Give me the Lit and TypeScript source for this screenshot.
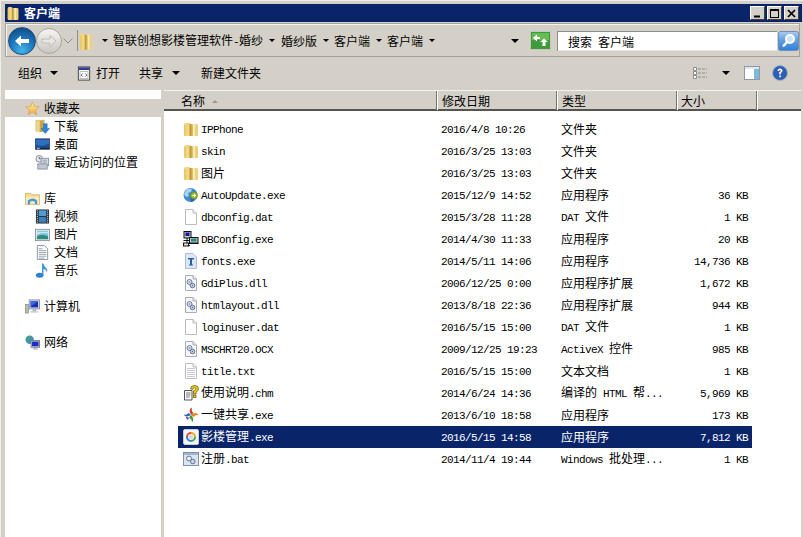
import { LitElement, html, css, svg } from "lit";
import { customElement } from "lit/decorators.js";

const folder = () => svg`<svg class="ic" viewBox="0 0 16 16" preserveAspectRatio="none">
  <path d="M1 3.500 Q1 2 2.500 2 H5.500 Q7 2 7 3.500 V13.500 Q7 15 5.500 15 H2.500 Q1 15 1 13.500Z" fill="#f0d680"/>
  <path d="M1 4 H3 V15 H2.500 Q1 15 1 13.500Z" fill="#e8c868"/>
  <path d="M7 3 H13.500 Q15 3 15 4.500 V13.500 Q15 15 13.500 15 H7Z" fill="#f8eab0"/>
  <path d="M12 3 H13.500 Q15 3 15 4.500 V13.500 Q15 15 13.500 15 H12Z" fill="#ecd07e"/>
  <path d="M6.500 2.500 L9.500 3.500 V15 H6.500Z" fill="#bd9a3e"/>
  <path d="M8.500 3.500 L9.500 3.500 V15 H8.500Z" fill="#dcbc62"/>
</svg>`;

const blank = () => svg`<svg class="ic" viewBox="0 0 16 16">
  <path d="M2.500 .500 H10 L13.500 4 V15.500 H2.500Z" fill="#fff" stroke="#b9bcc2"/><path d="M10 .500 V4 H13.500" fill="#eef0f3" stroke="#b9bcc2"/>
</svg>`;

const txt = () => svg`<svg class="ic" viewBox="0 0 16 16">
  <path d="M2.500 .500 H10 L13.500 4 V15.500 H2.500Z" fill="#fff" stroke="#b9bcc2"/><path d="M10 .500 V4 H13.500" fill="#eef0f3" stroke="#b9bcc2"/>
  <path d="M4 5.500H12M4 7.500H12M4 9.500H12M4 11.500H12M4 13.500H12" stroke="#c8ccd2"/>
</svg>`;

const dll = () => svg`<svg class="ic" viewBox="0 0 16 16">
  <path d="M2.500 .500 H10 L13.500 4 V15.500 H2.500Z" fill="#f6f8fb" stroke="#a8adb6"/><path d="M10 .500 V4 H13.500" fill="#e6eaf0" stroke="#a8adb6"/>
  <circle cx="6.500" cy="7" r="2.500" fill="#dfe6ee" stroke="#6f7f96"/><circle cx="9.500" cy="10.500" r="2.300" fill="#c8d4e2" stroke="#5d7595"/><circle cx="6.500" cy="7" r=".8" fill="#6f7f96"/><circle cx="9.500" cy="10.500" r=".7" fill="#5d7595"/>
</svg>`;

const globe = () => svg`<svg class="ic" viewBox="0 0 16 16">
  <circle cx="7.500" cy="8" r="7" fill="#3f8bc9"/><path d="M3 3 Q6 1 9 2 L8 5 L5 6 L6 9 L3 10 L1 7Z" fill="#a9d3ee"/><path d="M7 11 L11 10 L11 14 L8 15Z" fill="#2c6aa3"/>
  <circle cx="11" cy="8.500" r="3.500" fill="#9dbb2f" stroke="#5f7f1a" stroke-width=".6"/><path d="M9.200 8.500 H12.500 M11 7 L12.700 8.500 L11 10" stroke="#fff" fill="none"/>
</svg>`;

const dbc = () => svg`<svg class="ic" viewBox="0 0 16 16">
  <rect x="1" y="0.500" width="7" height="6.500" fill="#c8ccd0" stroke="#111"/><rect x="2.500" y="1.500" width="4" height="3.500" fill="#16169a"/>
  <rect x="6.500" y="6.500" width="8.500" height="5.500" fill="#c8ccd0" stroke="#111"/><rect x="8" y="7.500" width="5.500" height="3" fill="#1f8a8a"/>
  <path d="M4 7 V12 M0.500 9.500 H6 M6 12.500 H15.500 M1 14.500 H7 M3 12 V14.500" stroke="#111"/><rect x="0.500" y="12" width="5" height="3" fill="#dfe0e0" stroke="#111"/>
</svg>`;

const fonts = () => svg`<svg class="ic" viewBox="0 0 16 16">
  <path d="M2.500 .500 H10 L13.500 4 V15.500 H2.500Z" fill="#dde8f6" stroke="#aebdd4"/>
  <path d="M5 5 H11 V6.500 H9 V11.500 H10 V12.500 H6 V11.500 H7 V6.500 H5Z" fill="#2b5fa8"/>
</svg>`;

const chm = () => svg`<svg class="ic" viewBox="0 0 16 16">
  <path d="M1.500 5.500 H9 V15 H1.500Z" fill="#fbfbfb" stroke="#555"/><path d="M3 8 H7.500 M3 10 H7.500 M3 12 H6.500" stroke="#777"/>
  <path d="M7.500 4 Q7.500 .500 11.500 .500 Q15.500 .500 15.500 3.800 Q15.500 6 13 7 V9 H10.500 V5.800 Q13 5.300 13 3.800 Q13 2.800 11.500 2.800 Q10 2.800 10 4.300Z" fill="#f7d21b" stroke="#5a4a00" stroke-width=".7"/><rect x="10.500" y="10" width="2.500" height="2.500" fill="#f7d21b" stroke="#5a4a00" stroke-width=".7"/>
</svg>`;

const share = () => svg`<svg class="ic" viewBox="0 0 16 16">
  <path d="M8 8 Q5 2 9 .500 Q8 4 10.500 6Z" fill="#d23a2f"/><path d="M8 8 Q13 4 15.500 8 Q12 7.500 10.500 10Z" fill="#e08a1e"/>
  <path d="M8 8 Q12 12 9 15.500 Q8.800 12 6 10.500Z" fill="#3f9a3d"/><path d="M8 8 Q3 11 .500 7.500 Q4 8.500 5.500 6Z" fill="#2b5fb8"/><path d="M5 13 Q3 11.500 2.500 9.500 Q4.500 10.500 6 10.500Z" fill="#7a3fa0"/>
</svg>`;

const app = () => svg`<svg class="ic" viewBox="0 0 16 16">
  <rect x=".500" y=".500" width="15" height="15" rx="1.500" fill="#f4f6f8" stroke="#c8ccd2"/>
  <path d="M3 8 A5 5 0 0 1 8 3 L8 5 A3 3 0 0 0 5 8Z" fill="#e64a2e"/><path d="M8 3 A5 5 0 0 1 13 8 L11 8 A3 3 0 0 0 8 5Z" fill="#f2a81d"/>
  <path d="M13 8 A5 5 0 0 1 8 13 L8 11 A3 3 0 0 0 11 8Z" fill="#4aa84a"/><path d="M8 13 A5 5 0 0 1 3 8 L5 8 A3 3 0 0 0 8 11Z" fill="#2f86d6"/>
  <circle cx="8" cy="8" r="2.200" fill="#cfd8e6"/>
</svg>`;

const bat = () => svg`<svg class="ic" viewBox="0 0 16 16">
  <rect x=".500" y="1.500" width="15" height="13" fill="#dbe6f2" stroke="#7e8fa6"/><rect x="1" y="2" width="14" height="2" fill="#9db6d4"/>
  <circle cx="6" cy="7.500" r="2.500" fill="#e8edf3" stroke="#68788e"/><circle cx="9.800" cy="10.500" r="2.300" fill="#c8d4e2" stroke="#5d7595"/>
</svg>`;

const star = () => svg`<svg class="ic" viewBox="0 0 16 16">
  <defs><linearGradient id="sg" x1="0" x2="0" y1="0" y2="1"><stop offset="0" stop-color="#fff2b0"/><stop offset="1" stop-color="#f2a93a"/></linearGradient></defs>
  <path d="M8 1 L10 5.800 L15.200 6.200 L11.200 9.500 L12.500 14.600 L8 11.800 L3.500 14.600 L4.800 9.500 L.800 6.200 L6 5.800Z" fill="url(#sg)" stroke="#d9a24c" stroke-width=".8"/>
</svg>`;

const download = () => svg`<svg class="ic" viewBox="0 0 16 16">
  <path d="M1 1.500 H10 V13 H1Z" fill="#f1d98c" stroke="#c8a850" stroke-width=".6"/><path d="M5 2 L9 1 V13 L5 14Z" fill="#c9a544"/>
  <path d="M9 5 H13 V10 H15.500 L11 15.500 L6.500 10 H9Z" fill="#2f86d6" stroke="#1d5fa0" stroke-width=".5"/>
</svg>`;

const desktop = () => svg`<svg class="ic" viewBox="0 0 16 16">
  <rect x=".500" y="2" width="15" height="11" fill="#1e4c8e" stroke="#3b4f6b"/><path d="M1 3 H15 V7 Q8 11 1 8Z" fill="#2e6fc0"/><rect x="1" y="11.500" width="14" height="1.500" fill="#0d2a55"/><rect x="2" y="11.500" width="3" height="1" fill="#cfd8e6"/>
</svg>`;

const recent = () => svg`<svg class="ic" viewBox="0 0 16 16">
  <circle cx="4.500" cy="4" r="3.500" fill="#e8edf2" stroke="#7d8896"/><path d="M4.500 2 V4 H6" stroke="#555" fill="none"/>
  <rect x="6.500" y="3.500" width="8" height="8" fill="#e3e7ec" stroke="#8a939f"/><path d="M8 5.500 H13 M8 7.500 H13 M8 9.500 H11" stroke="#8a939f"/>
  <rect x="3" y="9.500" width="10" height="5.500" fill="#c2c8cf" stroke="#8a939f"/>
</svg>`;

const library = () => svg`<svg class="ic" viewBox="0 0 16 16">
  <path d="M.500 2.500 H6 L7.500 4 H15.500 V14.500 H.500Z" fill="#f2dc94" stroke="#c8a850" stroke-width=".7"/><path d="M1 6 H15 V14 H1Z" fill="#f8eab8"/>
  <path d="M3 14 V10 Q8 6 13 10 V14 H10.500 V11.500 Q8 9.800 5.500 11.500 V14Z" fill="#4e97cf"/>
</svg>`;

const video = () => svg`<svg class="ic" viewBox="0 0 16 16">
  <rect x="1" y=".500" width="14" height="15" fill="#2a2f36"/><rect x="4" y="1.500" width="8" height="6" fill="#4d9cd8"/><rect x="4" y="8.500" width="8" height="6" fill="#3d7fb8"/>
  <path d="M2 2H3M2 4H3M2 6H3M2 8H3M2 10H3M2 12H3M2 14H3M13 2H14M13 4H14M13 6H14M13 8H14M13 10H14M13 12H14M13 14H14" stroke="#e6e8ea"/>
</svg>`;

const pic = () => svg`<svg class="ic" viewBox="0 0 16 16">
  <rect x=".500" y="2.500" width="15" height="12" fill="#eef0f2" stroke="#8a939f"/><rect x="2" y="4" width="12" height="9" fill="#7cc0d8"/><path d="M2 10 Q7 7 14 10 V13 H2Z" fill="#2f8a80"/><path d="M2 5 H14 V7 Q8 6 2 8Z" fill="#c8e6f0"/>
</svg>`;

const doc = () => svg`<svg class="ic" viewBox="0 0 16 16">
  <path d="M2.500 .500 H10 L13.500 4 V15.500 H2.500Z" fill="#fafbfc" stroke="#8a939f"/><path d="M4 4H8M4 6H12M4 8H12M4 10H12M4 12H12M4 14H10" stroke="#9aa3ae"/>
</svg>`;

const music = () => svg`<svg class="ic" viewBox="0 0 16 16">
  <ellipse cx="5" cy="13" rx="4" ry="2.700" fill="#2d7fcf"/><path d="M7.500 13 V.500 H9 Q9.500 4 12.500 6 Q14 8 12.500 10 Q12.500 7.500 9 6.500 V13Z" fill="#3f93dc"/>
</svg>`;

const computer = () => svg`<svg class="ic" viewBox="0 0 16 16">
  <rect x="4.500" y="1" width="11" height="9.500" fill="#d8dde3" stroke="#8a939f"/><rect x="6" y="2.500" width="8" height="6.500" fill="#1a2fc0"/><path d="M6 2.500 H14 L6 8Z" fill="#3a66e0"/>
  <rect x="8" y="11" width="4" height="2" fill="#aab2bb"/><rect x="6" y="13" width="8" height="1.500" fill="#c4cad1"/><rect x=".500" y="6" width="3" height="9" fill="#b6bdb0" stroke="#7d8576" stroke-width=".7"/>
</svg>`;

const network = () => svg`<svg class="ic" viewBox="0 0 16 16">
  <circle cx="5" cy="5" r="4.500" fill="#3f93c9"/><path d="M2 3 L6 1.500 L6 4 L3 6Z M5 7 L8 6 L7 9 L5 9Z" fill="#4faa45"/>
  <rect x="6.500" y="6" width="9" height="7" fill="#d8dde3" stroke="#6d7785"/><rect x="7.500" y="7" width="7" height="5" fill="#1a2fc0"/><rect x="9.500" y="13" width="3" height="1.500" fill="#8a939f"/><rect x="8" y="14.500" width="6" height="1" fill="#aab2bb"/>
</svg>`;

const openIc = () => svg`<svg class="ic" viewBox="0 0 16 16">
  <rect x="1.500" y=".500" width="13" height="15" fill="#f7f7f7" stroke="#333"/><rect x="2" y="1" width="12" height="3" fill="#2a3f9e"/>
  <rect x="3.500" y="6" width="9" height="7.500" fill="#fff" stroke="#888" stroke-width=".6"/><path d="M6.500 8 L4.800 9.800 L6.500 11.500 M9.500 8 L11.200 9.800 L9.500 11.500" stroke="#444" fill="none"/>
</svg>`;

const files = [
  [folder, "IPPhone", "2016/4/8 10:26", "文件夹", ""],
  [folder, "skin", "2016/3/25 13:03", "文件夹", ""],
  [folder, "图片", "2016/3/25 13:03", "文件夹", ""],
  [globe, "AutoUpdate.exe", "2015/12/9 14:52", "应用程序", "36 KB"],
  [blank, "dbconfig.dat", "2015/3/28 11:28", "DAT 文件", "1 KB"],
  [dbc, "DBConfig.exe", "2014/4/30 11:33", "应用程序", "20 KB"],
  [fonts, "fonts.exe", "2014/5/11 14:06", "应用程序", "14,736 KB"],
  [dll, "GdiPlus.dll", "2006/12/25 0:00", "应用程序扩展", "1,672 KB"],
  [dll, "htmlayout.dll", "2013/8/18 22:36", "应用程序扩展", "944 KB"],
  [blank, "loginuser.dat", "2016/5/15 15:00", "DAT 文件", "1 KB"],
  [dll, "MSCHRT20.OCX", "2009/12/25 19:23", "ActiveX 控件", "985 KB"],
  [txt, "title.txt", "2016/5/15 15:00", "文本文档", "1 KB"],
  [chm, "使用说明.chm", "2014/6/24 14:36", "编译的 HTML 帮...", "5,969 KB"],
  [share, "一键共享.exe", "2013/6/10 18:58", "应用程序", "173 KB"],
  [app, "影楼管理.exe", "2016/5/15 14:58", "应用程序", "7,812 KB"],
  [bat, "注册.bat", "2014/11/4 19:44", "Windows 批处理...", "1 KB"],
] as const;

const runs = (t: string) =>
  t.split(/([\x00-\x7f]+)/).filter(Boolean).map((p) =>
    /^[\x00-\x7f]+$/.test(p) ? html`<span class="lat">${p}</span>` : p
  );

const side: [any, string, number][] = [
  [star, "收藏夹", 0], [download, "下载", 1], [desktop, "桌面", 1], [recent, "最近访问的位置", 1], [null, "", 0],
  [library, "库", 0], [video, "视频", 1], [pic, "图片", 1], [doc, "文档", 1], [music, "音乐", 1], [null, "", 0],
  [computer, "计算机", 0], [null, "", 0], [network, "网络", 0],
];

@customElement("app-root")
export class AppRoot extends LitElement {
  static styles = css`
    :host { display: block; width: 803px; height: 537px; overflow: hidden; background: #d4d0c8; color: #000;
      font: 12px/16px "Noto Sans CJK SC", "Liberation Sans", sans-serif; }
    * { box-sizing: border-box; }
    .lat { font-family: "Liberation Mono", monospace; font-size: 11px; letter-spacing: -.6px; white-space: pre; }
    .ic { width: 16px; height: 16px; display: block; flex: none; }
    .win { height: 537px; padding: 3px 1px 0 4px; display: flex; flex-direction: column;
      border-top: 1px solid #eee; border-left: 1px solid #f0eee8; box-shadow: inset 1px 0 0 #d4d0c8; }
    .title { height: 18px; background: #0a246a; color: #fff; display: flex; align-items: center; padding: 0 3px 0 2px; gap: 2px; font-weight: 700; }
    .title .ic { width: 12px; height: 16px; }
    .title .t { flex: 1; font-size: 12px; margin-left: 3px; }
    .wb { width: 15px; height: 14px; margin-left: 0; background: #d4d0c8; border: 1px solid; border-color: #fff #404040 #404040 #fff; display: flex; align-items: center; justify-content: center; }
    .wb svg { display: block; width: 9px; height: 9px; }
    .addr { height: 34px; margin-top: 1px; margin-right: 2px; border: 1px solid #a5a29b; box-shadow: inset 1px 1px 0 #f4f3ef; display: flex; align-items: center; padding: 1px 0 0 3px; background: #d4d0c8; }
    .back { width: 28px; height: 28px; border-radius: 50%; flex: none; margin-left: -1px;
      background: radial-gradient(circle at 50% 85%, #46b4ec 0, #1c78bc 45%, #0f3f74 100%); border: 1px solid #1d4f80; display: flex; align-items: center; justify-content: center; }
    .fwd { width: 26px; height: 26px; border-radius: 50%; flex: none;
      background: linear-gradient(#f4f4f2, #c9c7c1); border: 1px solid #a6a6a2; display: flex; align-items: center; justify-content: center; }
    .back svg, .fwd svg { width: 16px; height: 14px; display: block; }
    .chev { width: 10px; height: 6px; margin: 0 4px 0 1px; flex: none; display: block; }
    .crumb { height: 21px; width: 453px; flex: none; border-left: 1px solid #8f8d86; display: flex; align-items: center; padding-left: 1px; }
    .crumb .ic { width: 14px; height: 20px; margin-right: 9px; }
    .dn { width: 0; height: 0; border: 3px solid transparent; border-top: 3px solid #000; border-bottom: 0; flex: none; margin: 0 5px 0 6px; }
    .crumb .dn.d0 { margin: 0 5px 0 0; }
    .crumb .dn.d1 { margin: 0 6px 0 6px; }
    .sp { flex: 1; }
    .crumb .dn.big { border-width: 4px; border-bottom-width: 0; margin: 0 11px 0 0; }
    .refresh { width: 21px; height: 19px; flex: none; display: block; }
    .search { width: 220px; height: 20px; margin-left: 6px; flex: none; background: #fff; border: 1px solid #8f8d86; border-width: 1px 0 0 1px; box-shadow: inset 0 -1px 0 #e8e6e0; padding-left: 10px; line-height: 20px; }
    .sb { width: 21px; height: 20px; margin-left: 1px; flex: none; display: block; }
    .tools { height: 33px; display: flex; align-items: center; padding: 0 0 1px 13px; }
    .tools .ic { width: 14px; height: 15px; }
    .tools .dn { border-width: 4px; border-bottom-width: 0; }
    .tools .dn.m1 { margin: 0 19px 0 8px; }
    .tools .dn.m3 { margin: 0 21px 0 9px; }
    .tools .dn.m4 { margin: 0 14px; }
    .m2 { margin-left: 5px; margin-right: 19px; }
    .tools .end { display: flex; align-items: center; margin-left: auto; padding-right: 14px; }
    .tools .end svg { display: block; }
    .tools .end .help { margin-left: 12px; }
    .body { flex: 1; display: flex; min-height: 0; margin-right: 1px; }
    .side { width: 156px; flex: none; background: #fff; padding-top: 9px; }
    .si { height: 18px; display: flex; align-items: center; padding-left: 20px; gap: 4px; }
    .si.sub { padding-left: 30px; }
    .si.sel { background: #d4d0c8; }
    .si .ic { width: 15px; height: 15px; }
    .sash { width: 3px; flex: none; background: #d4d0c8; }
    .main { flex: 1; background: #fff; min-width: 0; }
    .head { height: 21px; display: grid; grid-template-columns: 273px 120px 120px 80px 1fr; background: #d4d0c8; border-top: 1px solid #f2f1ed; border-bottom: 2px solid #55544f; }
    .hc { border-right: 1px solid #76746e; box-shadow: 1px 0 0 #fff; padding: 1px 0 0 5px; line-height: 18px; display: flex; align-items: center; gap: 7px; }
    .hc.first { padding-left: 17px; }
    .hc.c4 { padding-left: 4px; }
    .hc:last-child { border-right: 0; box-shadow: none; }
    .tri { width: 0; height: 0; border: 3.5px solid transparent; border-bottom: 3.500px solid #9b9a96; border-top: 0; display: block; }
    .list { padding: 7px 0 0 14px; }
    .row { width: 574px; height: 22px; padding-left: 5px; display: grid; grid-template-columns: 18px 240px 120px 100px 87px; align-items: center; color: #000; }
    .row.sel { background: #0a246a; color: #fff; }
    .sz { text-align: right; }
    .row > div { white-space: nowrap; }
  `;

  render() {
    return html`<div class="win">
      <div class="title">
        ${folder()}<span class="t">客户端</span>
        <span class="wb"><svg viewBox="0 0 9 9"><rect x="1" y="6.500" width="6" height="2" fill="#000"/></svg></span>
        <span class="wb"><svg viewBox="0 0 9 9"><rect x=".5" y=".5" width="8" height="8" fill="none" stroke="#000"/><rect x="0" y="0" width="9" height="2" fill="#000"/></svg></span>
        <span class="wb"><svg viewBox="0 0 9 9"><path d="M1 1 L8 8 M8 1 L1 8" stroke="#000" stroke-width="1.700"/></svg></span>
      </div>
      <div class="addr">
        <span class="back"><svg viewBox="0 0 16 14"><path d="M1 7 L7 1.500 V5 H15 V9 H7 V12.500Z" fill="#fff"/></svg></span>
        <span class="fwd"><svg viewBox="0 0 16 14"><path d="M15 7 L9 1.500 V5 H1 V9 H9 V12.500Z" fill="#e8e7e3" stroke="#bdbcb7"/></svg></span>
        <svg class="chev" viewBox="0 0 10 6"><path d="M.5 .5 L5 5 L9.500 .5" fill="none" stroke="#8d8d88"/></svg>
        <div class="crumb">
          ${folder()}
          <i class="dn d0"></i><span>智联创想影楼管理软件${runs("-")}婚纱</span>
          <i class="dn d1"></i><span>婚纱版</span>
          <i class="dn"></i><span>客户端</span>
          <i class="dn"></i><span>客户端</span>
          <i class="dn"></i>
          <span class="sp"></span>
          <i class="dn big"></i>
        </div>
        <svg class="refresh" viewBox="0 0 21 19"><rect x=".5" y=".5" width="20" height="18" fill="#3f9a3a" stroke="#c8c6bf"/><rect x="2" y="2" width="17" height="7" fill="#66bd55"/><path d="M3 7 L7 3.500 V6 H10 V8 H7 V10.500Z M18 11 L14 7.500 L10 11 H12.500 V15 H15.500 V11Z" fill="#fff"/></svg>
        <div class="search">搜索${runs(" ")}客户端</div>
        <svg class="sb" viewBox="0 0 21 20"><defs><linearGradient id="sbg" x1="0" x2="0" y1="0" y2="1"><stop offset="0" stop-color="#a9cdf0"/><stop offset=".5" stop-color="#5b9de0"/><stop offset="1" stop-color="#2f7ed8"/></linearGradient></defs><rect x=".5" y=".5" width="20" height="19" rx="2" fill="url(#sbg)" stroke="#6f8fb8"/><circle cx="12" cy="8" r="4" fill="#cfe3f7" stroke="#fff" stroke-width="2"/><path d="M9 11 L5 15.500" stroke="#fff" stroke-width="2.500"/></svg>
      </div>
      <div class="tools">
        <span>组织</span><i class="dn m1"></i>
        ${openIc()}<span class="m2">打开</span>
        <span>共享</span><i class="dn m3"></i>
        <span>新建文件夹</span>
        <span class="end">
          <svg width="16" height="14" viewBox="0 0 16 14"><path d="M1.500 1.500H4.500V4.500H1.500ZM1.500 5.500H4.500V8.500H1.500ZM1.500 9.500H4.500V12.500H1.500Z" fill="#fff" stroke="#8d8d88"/><path d="M6 3H15M6 7H15M6 11H15" stroke="#8d8d88" stroke-dasharray="3 1"/></svg>
          <i class="dn m4"></i>
          <svg width="16" height="16" viewBox="0 0 16 16"><rect x=".5" y="1.500" width="15" height="13" fill="#fff" stroke="#8d9aa6"/><rect x="1" y="2" width="14" height="2" fill="#dfe8f0"/><rect x="10" y="4" width="5" height="10" fill="#7fb8d8"/></svg>
          <svg class="help" width="16" height="16" viewBox="0 0 16 16"><circle cx="8" cy="8" r="7.500" fill="#2f5fb0" stroke="#9fb2d4"/><path d="M5.500 6 Q5.500 3.500 8 3.500 Q10.500 3.500 10.500 5.800 Q10.500 7.200 8.800 8 V9.500 H7.200 V7.200 Q8.800 6.800 8.800 5.800 Q8.800 5 8 5 Q7.200 5 7.200 6Z" fill="#fff"/><rect x="7.200" y="10.500" width="1.700" height="1.700" fill="#fff"/></svg>
        </span>
      </div>
      <div class="body">
        <div class="side">
          ${side.map(([ic, t, sub], i) => html`<div class="si ${sub ? "sub" : ""} ${i === 0 ? "sel" : ""}">${ic ? ic() : ""}<span>${t}</span></div>`)}
        </div>
        <div class="sash"></div>
        <div class="main">
          <div class="head">
            <div class="hc first"><span>名称</span><i class="tri"></i></div>
            <div class="hc">修改日期</div>
            <div class="hc">类型</div>
            <div class="hc c4">大小</div>
            <div class="hc"></div>
          </div>
          <div class="list">
            ${files.map(([ic, n, d, t, s]) => html`<div class="row ${n.startsWith("影楼") ? "sel" : ""}">
              ${ic()}<div>${runs(n)}</div><div>${runs(d)}</div><div>${runs(t)}</div><div class="sz">${runs(s)}</div>
            </div>`)}
          </div>
        </div>
      </div>
    </div>`;
  }
}
